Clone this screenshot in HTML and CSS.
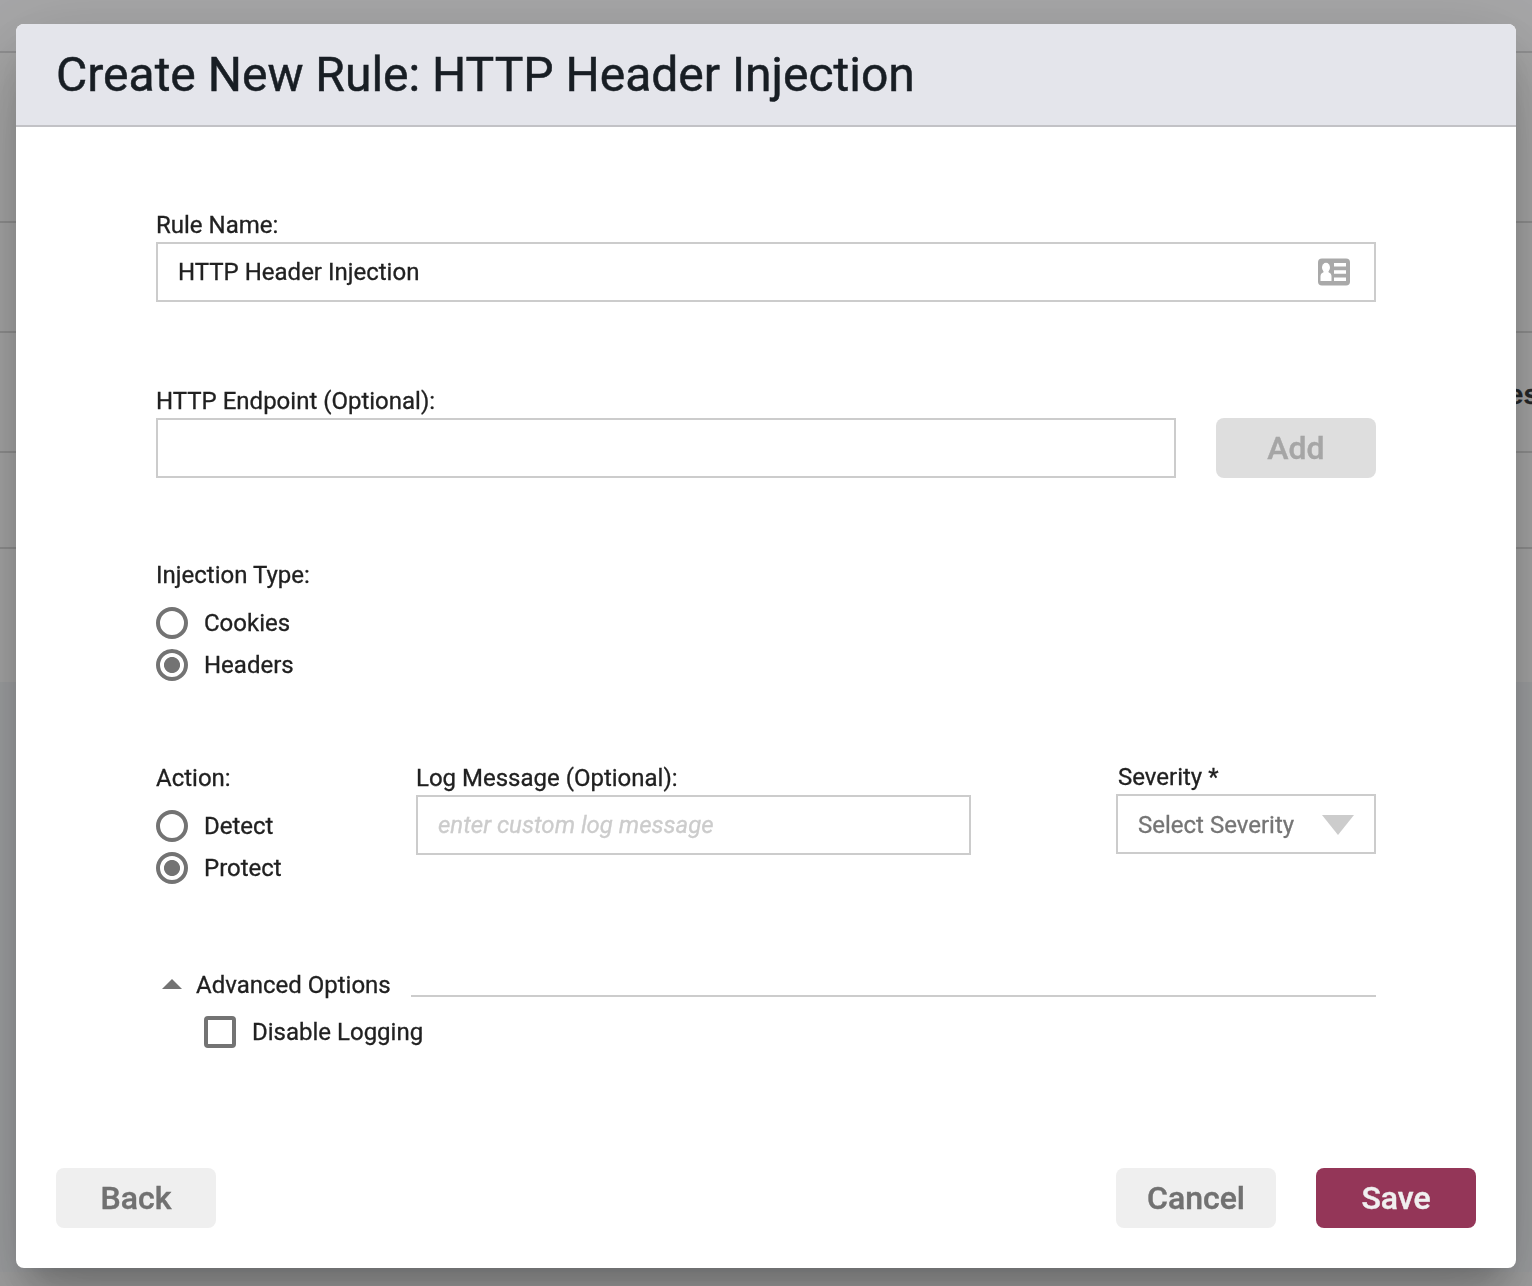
FILE: index.html
```html
<!DOCTYPE html>
<html lang="en">
<head>
<meta charset="utf-8">
<title>Create New Rule</title>
<link rel="stylesheet" href="styles.css">
</head>
<body>
<div class="page">
  <div class="page-top"></div>
  <div class="page-row row-a"></div>
  <div class="page-row row-b"></div>
  <div class="page-row row-c"><span>es</span></div>
  <div class="page-row row-d"></div>
  <div class="page-row row-e"></div>
  <div class="page-rest"></div>
  <div class="page-foot"></div>
</div>
<div class="backdrop">
  <form class="dialog">
    <header class="dialog-head"><h1>Create New Rule: HTTP Header Injection</h1></header>
    <main class="dialog-body">
      <section class="field name-field">
        <label>Rule Name:</label>
        <div class="box"><span>HTTP Header Injection</span>
          <svg class="card-icon" width="32" height="28" viewBox="0 0 32 28"><rect y="0.500" width="32" height="27" rx="4" fill="#a9a9a9"/><g fill="#fff"><ellipse cx="8" cy="9.5" rx="4" ry="4.700"/><path d="M5.500 12h5v2.200c2 .8 3 2 3 4.300V23h-11v-4.500c0-2.300 1-3.500 3-4.300z"/><path d="M16 5h12v3.400H16zM16 12.300h12v3.400H16zM16 19.600h12v3.400H16z"/></g></svg>
        </div>
      </section>
      <section class="endpoint">
        <div class="field"><label>HTTP Endpoint (Optional):</label><div class="box"></div></div>
        <button type="button" class="btn btn-add">Add</button>
      </section>
      <section class="choices injection">
        <label>Injection Type:</label>
        <div class="choice"><i class="radio"></i>Cookies</div>
        <div class="choice"><i class="radio on"></i>Headers</div>
      </section>
      <section class="action-row">
        <div class="choices">
          <label>Action:</label>
          <div class="choice"><i class="radio"></i>Detect</div>
          <div class="choice"><i class="radio on"></i>Protect</div>
        </div>
        <div class="field log"><label>Log Message (Optional):</label><div class="box placeholder">enter custom log message</div></div>
        <div class="field severity"><label>Severity *</label>
          <div class="box"><span>Select Severity</span><svg width="32" height="20" viewBox="0 0 32 20"><path d="M0 0h32L16 20z" fill="#ccc"/></svg></div>
        </div>
      </section>
      <section class="advanced">
        <div class="advanced-head"><svg width="20" height="10" viewBox="0 0 20 10"><path d="M0 10h20L10 0z" fill="#737373"/></svg><span>Advanced Options</span><i class="rule"></i></div>
        <div class="choice"><i class="check"></i>Disable Logging</div>
      </section>
    </main>
    <footer class="dialog-foot">
      <button type="button" class="btn btn-back">Back</button>
      <button type="button" class="btn">Cancel</button>
      <button type="button" class="btn btn-save">Save</button>
    </footer>
  </form>
</div>
</body>
</html>
```
FILE: styles.css
```css
* { box-sizing: border-box; }
html, body { margin: 0; height: 100%; overflow: hidden; }
body { font-family: Roboto, sans-serif; font-size: 24px; line-height: 28px; color: #212121; -webkit-text-stroke: 0.3px; }

.page { height: 1286px; display: flex; flex-direction: column; background: #f7f7f7; }
.page-top { height: 53px; background: #f7f7f9; border-bottom: 2px solid #d6d6d8; }
.page-row { border-bottom: 2px solid #d5d5d5; }
.row-a { height: 170px; }
.row-b { height: 110px; }
.row-c { height: 120px; display: flex; justify-content: flex-end; align-items: center; font: bold 28px/32px "Liberation Sans", sans-serif; color: #36393c; }
.row-c span { margin-right: -7px; padding-top: 6px; }
.row-d { height: 96px; }
.row-e { height: 133px; border-bottom: 0; }
.page-rest { height: 590px; background: #eceef1; }
.page-foot { flex: 1; background: #f0f0f0; }

.backdrop { position: fixed; inset: 0; padding: 24px 16px 18px; background: rgba(0, 0, 0, 0.32); }
.dialog { height: 1244px; display: flex; flex-direction: column; background: #fff; border-radius: 8px; box-shadow: 0 22px 30px -14px rgba(0,0,0,.2), 0 48px 76px 6px rgba(0,0,0,.14), 0 18px 92px 16px rgba(0,0,0,.12); }
.dialog-head { height: 103px; padding: 21px 40px 0; background: #e4e5eb; border-bottom: 2px solid #c2c2c6; border-radius: 8px 8px 0 0; }
h1 { margin: 0; font-size: 48px; line-height: 60px; font-weight: 400; color: #181e24; -webkit-text-stroke: 0.5px; }
.dialog-body { flex: 1; padding: 82px 140px 0; }
label { display: block; line-height: 32px; }
.box { height: 60px; display: flex; align-items: center; justify-content: space-between; border: 2px solid #ccc; padding: 0 20px; background: #fff; }
.card-icon { margin-right: 4px; }
.name-field label, .endpoint label { margin-bottom: 1px; }

.endpoint { display: flex; align-items: flex-end; gap: 40px; margin-top: 83px; }
.endpoint .field { flex: 1; }
.btn { width: 160px; height: 60px; padding: 0; border: 0; border-radius: 8px; background: #efefef; color: #717171; font: 500 32px/60px Roboto, sans-serif; letter-spacing: 0; -webkit-text-stroke: 0.4px; }
.btn-add { background: #dedede; color: #a6a6a6; }

.injection { margin-top: 81px; }
.choices label { margin-bottom: 11px; }
.choice { display: flex; align-items: center; gap: 16px; height: 42px; }
.radio { width: 32px; height: 32px; border: 4px solid #737373; border-radius: 50%; }
.on { background: radial-gradient(circle, #737373 7.6px, transparent 8.400px); }

.action-row { display: flex; align-items: flex-start; margin-top: 76px; }
.action-row .choices { width: 260px; }
.log { width: 555px; }
.log .box { margin-top: 1px; }
.placeholder { font-style: italic; color: #ccc; }
.severity { width: 260px; margin: -1px 0 0 auto; }
.severity label { padding-left: 2px; margin-bottom: 1px; }
.severity .box { color: #757575; padding-top: 1px; }

.advanced { margin-top: 78px; }
.advanced-head { display: flex; align-items: center; height: 34px; padding-left: 6px; }
.advanced-head svg { margin-top: -1px; }
.advanced-head span { margin: 2px 20px 0 14px; }
.rule { flex: 1; height: 2px; margin-top: 24px; background: #ccc; }
.advanced .choice { padding-left: 48px; height: 61px; }
.check { width: 32px; height: 32px; border: 4px solid #737373; border-radius: 4px; }

.dialog-foot { display: flex; gap: 40px; padding: 0 40px 40px; }
.btn-back { margin-right: auto; }
.btn-save { background: #943658; color: #f0f0f0; }
```
